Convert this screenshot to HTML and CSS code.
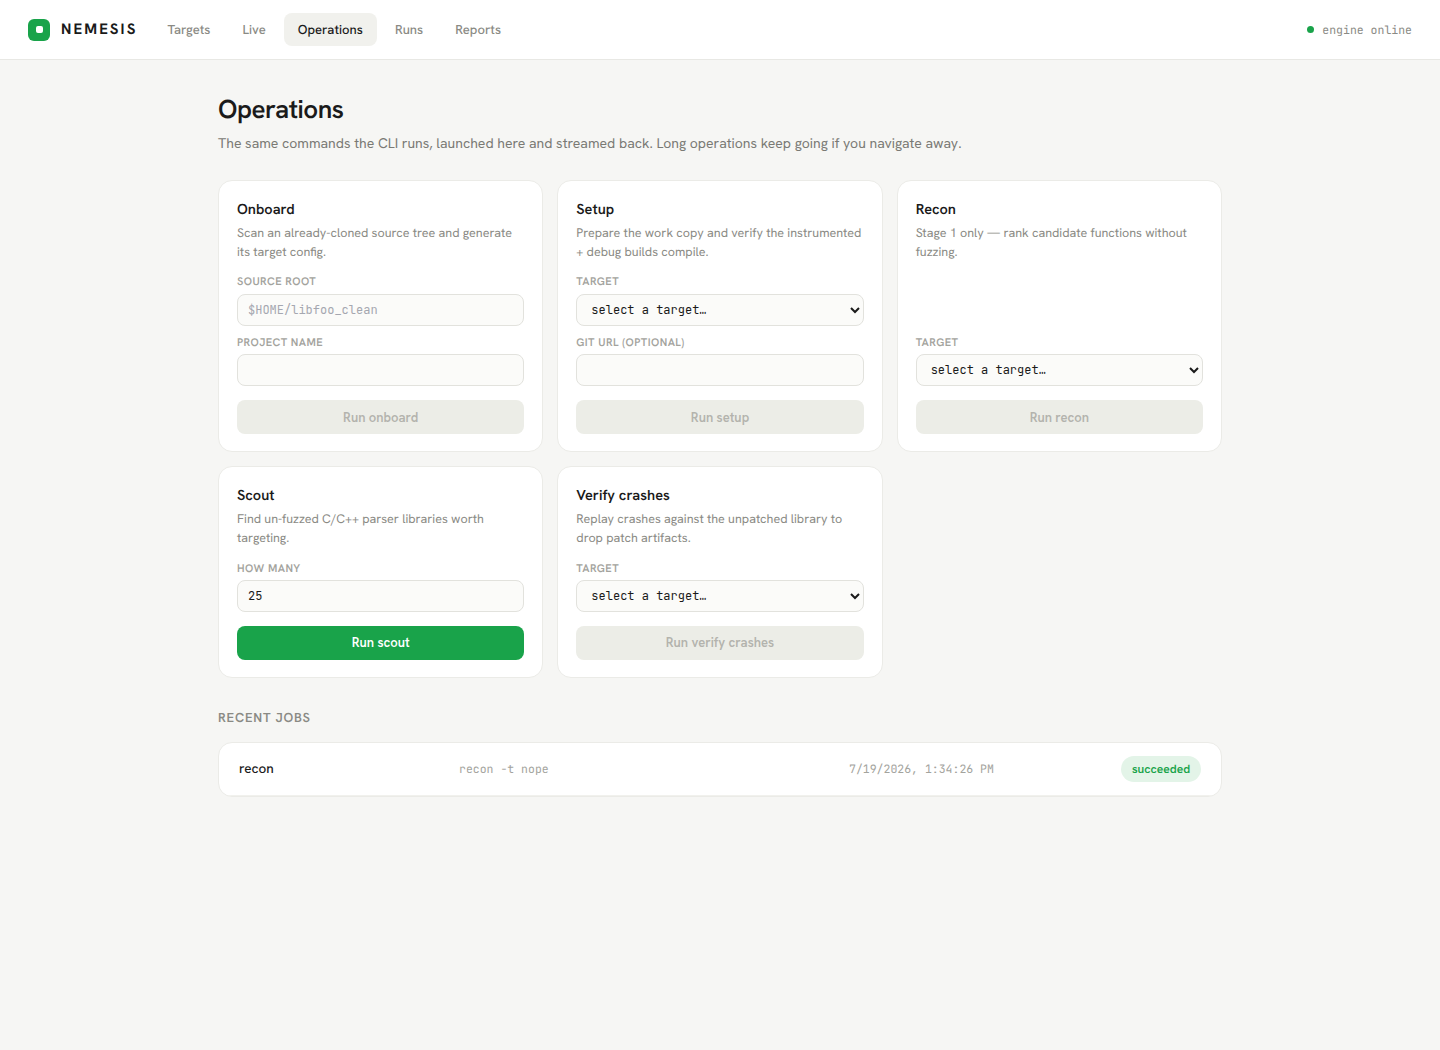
FILE: index.html
```
<!DOCTYPE html>
<html lang="en">
<head>
  <meta charset="UTF-8" />
  <meta name="viewport" content="width=device-width, initial-scale=1.0"/>
  <title>Nemesis - Operations</title>
  <link rel="stylesheet" href="styles.css">
</head>
<body>
  <header class="topbar">
    <div class="brand">
      <svg class="logo" width="22" height="22" viewBox="0 0 22 22">
        <rect width="22" height="22" rx="6" fill="#19a34a"/>
        <rect x="8" y="7" width="7" height="7" rx="2" fill="#fff"/>
      </svg>
      <span class="brand-name">NEMESIS</span>
    </div>
    <nav>
      <a href="#">Targets</a>
      <a href="#">Live</a>
      <a class="active" href="#">Operations</a>
      <a href="#">Runs</a>
      <a href="#">Reports</a>
    </nav>
    <div class="engine"><span class="dot"></span><span class="engine-text">engine online</span></div>
  </header>

  <main>
    <h1>Operations</h1>
    <p class="intro">The same commands the CLI runs, launched here and streamed back. Long operations keep going if you navigate away.</p>

    <div class="ops">
      <section class="card">
        <h2>Onboard</h2>
        <p class="desc">Scan an already-cloned source tree and generate its target config.</p>
        <label class="field"><span>Source root</span><input type="text" placeholder="$HOME/libfoo_clean"></label>
        <label class="field"><span>Project name</span><input type="text"></label>
        <button disabled>Run onboard</button>
      </section>

      <section class="card">
        <h2>Setup</h2>
        <p class="desc">Prepare the work copy and verify the instrumented + debug builds compile.</p>
        <label class="field"><span>Target</span><select><option>select a target…</option></select></label>
        <label class="field"><span>Git URL (optional)</span><input type="text"></label>
        <button disabled>Run setup</button>
      </section>

      <section class="card">
        <h2>Recon</h2>
        <p class="desc">Stage 1 only — rank candidate functions without fuzzing.</p>
        <label class="field"><span>Target</span><select><option>select a target…</option></select></label>
        <button disabled>Run recon</button>
      </section>

      <section class="card">
        <h2>Scout</h2>
        <p class="desc">Find un-fuzzed C/C++ parser libraries worth targeting.</p>
        <label class="field"><span>How many</span><input type="text" value="25"></label>
        <button>Run scout</button>
      </section>

      <section class="card">
        <h2>Verify crashes</h2>
        <p class="desc">Replay crashes against the unpatched library to drop patch artifacts.</p>
        <label class="field"><span>Target</span><select><option>select a target…</option></select></label>
        <button disabled>Run verify crashes</button>
      </section>
    </div>

    <h3>Recent jobs</h3>
    <div class="jobs">
      <div class="job">
        <span class="job-name">recon</span>
        <span class="job-cmd">recon -t nope</span>
        <span class="job-time">7/19/2026, 1:34:26 PM</span>
        <span class="badge">succeeded</span>
      </div>
    </div>
  </main>
</body>
</html>
```
FILE: styles.css
```
* {
  box-sizing: border-box;
}

body {
  margin: 0;
  background: #f6f6f4;
  color: #1a1a1a;
  font-family: "Hanken Grotesk", Roboto, "Liberation Sans", sans-serif;
  font-size: 14px;
  line-height: 1.5;
  text-rendering: geometricPrecision;
}

/* top bar */
.topbar {
  display: flex;
  align-items: center;
  height: 60px;
  padding: 0 28px;
  background: #fff;
  border-bottom: 1px solid #e8e8e4;
}

.brand {
  display: flex;
  align-items: center;
  gap: 11px;
  width: 125.5px;
}

.brand-name {
  font-size: 15px;
  font-weight: 700;
  letter-spacing: 0.14em;
  line-height: 20px;
  padding-bottom: 2px;
}

nav {
  display: flex;
  gap: 4px;
}

nav a {
  padding: 7px 14px;
  border-radius: 8px;
  color: #8a8a84;
  font-size: 13px;
  font-weight: 500;
  letter-spacing: 0.02px;
  text-decoration: none;
}

nav a.active {
  background: #f1f1ed;
  color: #1a1a1a;
}

.engine {
  display: flex;
  align-items: center;
  gap: 8px;
  margin-left: auto;
  color: #8a8a84;
  font-family: "JetBrains Mono", "DejaVu Sans Mono", monospace;
  font-size: 11.5px;
}

.engine-text {
  padding-top: 2px;
}

.dot {
  width: 7px;
  height: 7px;
  border-radius: 50%;
  background: #19a34a;
}

main {
  max-width: 1060px;
  margin: 0 auto;
  padding: 32px 28px;
}

h1 {
  margin: 0;
  font-size: 26px;
  font-weight: 600;
  line-height: 34px;
  letter-spacing: -0.02em;
}

.intro {
  margin: 7px 0 24.75px;
  color: #7a7a74;
  font-size: 14px;
  line-height: 22px;
}

/* operation cards */
.ops {
  display: grid;
  grid-template-columns: repeat(3, 1fr);
  grid-template-rows: 272.25px 211.75px;
  gap: 14px;
}

.card {
  display: flex;
  flex-direction: column;
  padding: 18px 18px 17px;
  background: #fff;
  border: 1px solid #ebebe7;
  border-radius: 14px;
}

h2 {
  margin: 0 0 2.25px;
  font-size: 14.5px;
  font-weight: 600;
  line-height: 22px;
}

.desc {
  flex: 1;
  margin: 0;
  color: #8a8a84;
  font-size: 12.5px;
  line-height: 19px;
}

.field {
  display: flex;
  flex-direction: column;
  gap: 1.75px;
  margin-bottom: 8.25px;
}

.field span {
  color: #a3a39d;
  font-size: 11px;
  font-weight: 600;
  line-height: 18.5px;
  letter-spacing: 0.04em;
  text-transform: uppercase;
}

.field + .field {
  margin-top: 0;
}

.desc + .field {
  margin-top: -2px;
}

input,
select {
  width: 100%;
  height: 32px;
  padding: 0 10px;
  background: #fbfbf9;
  color: #1a1a1a;
  border: 1px solid #e2e2dd;
  border-radius: 8px;
  font-family: "JetBrains Mono", "DejaVu Sans Mono", monospace;
  font-size: 12px;
}

input::placeholder {
  color: #a5a7b0;
}

button {
  height: 34px;
  margin-top: 5.75px;
  border: none;
  border-radius: 8px;
  background: #19a34a;
  color: #fff;
  font-family: inherit;
  font-size: 13px;
  font-weight: 600;
}

button:disabled {
  background: #ecede7;
  color: #b3b3ad;
}

/* job list */
h3 {
  margin: 30px 0 14px;
  color: #8a8a84;
  font-size: 13px;
  font-weight: 600;
  line-height: 20px;
  letter-spacing: 0.06em;
  text-transform: uppercase;
}

.jobs {
  background: #fff;
  border: 1px solid #ebebe7;
  border-radius: 14px;
  overflow: hidden;
}

.job {
  display: grid;
  grid-template-columns: 220px 390px 1fr auto;
  align-items: center;
  height: 53px;
  padding: 0 20px;
  border-bottom: 1px solid #f1f1ed;
}

.job-name {
  font-size: 13.5px;
  font-weight: 500;
}

.job-cmd,
.job-time {
  padding-top: 2px;
  color: #a3a39d;
  font-family: "JetBrains Mono", "DejaVu Sans Mono", monospace;
  font-size: 11.5px;
}

.badge {
  width: 80px;
  height: 26px;
  line-height: 26px;
  border-radius: 13px;
  background: #e3f4e8;
  color: #19a34a;
  font-size: 12px;
  font-weight: 600;
  text-align: center;
}
```
